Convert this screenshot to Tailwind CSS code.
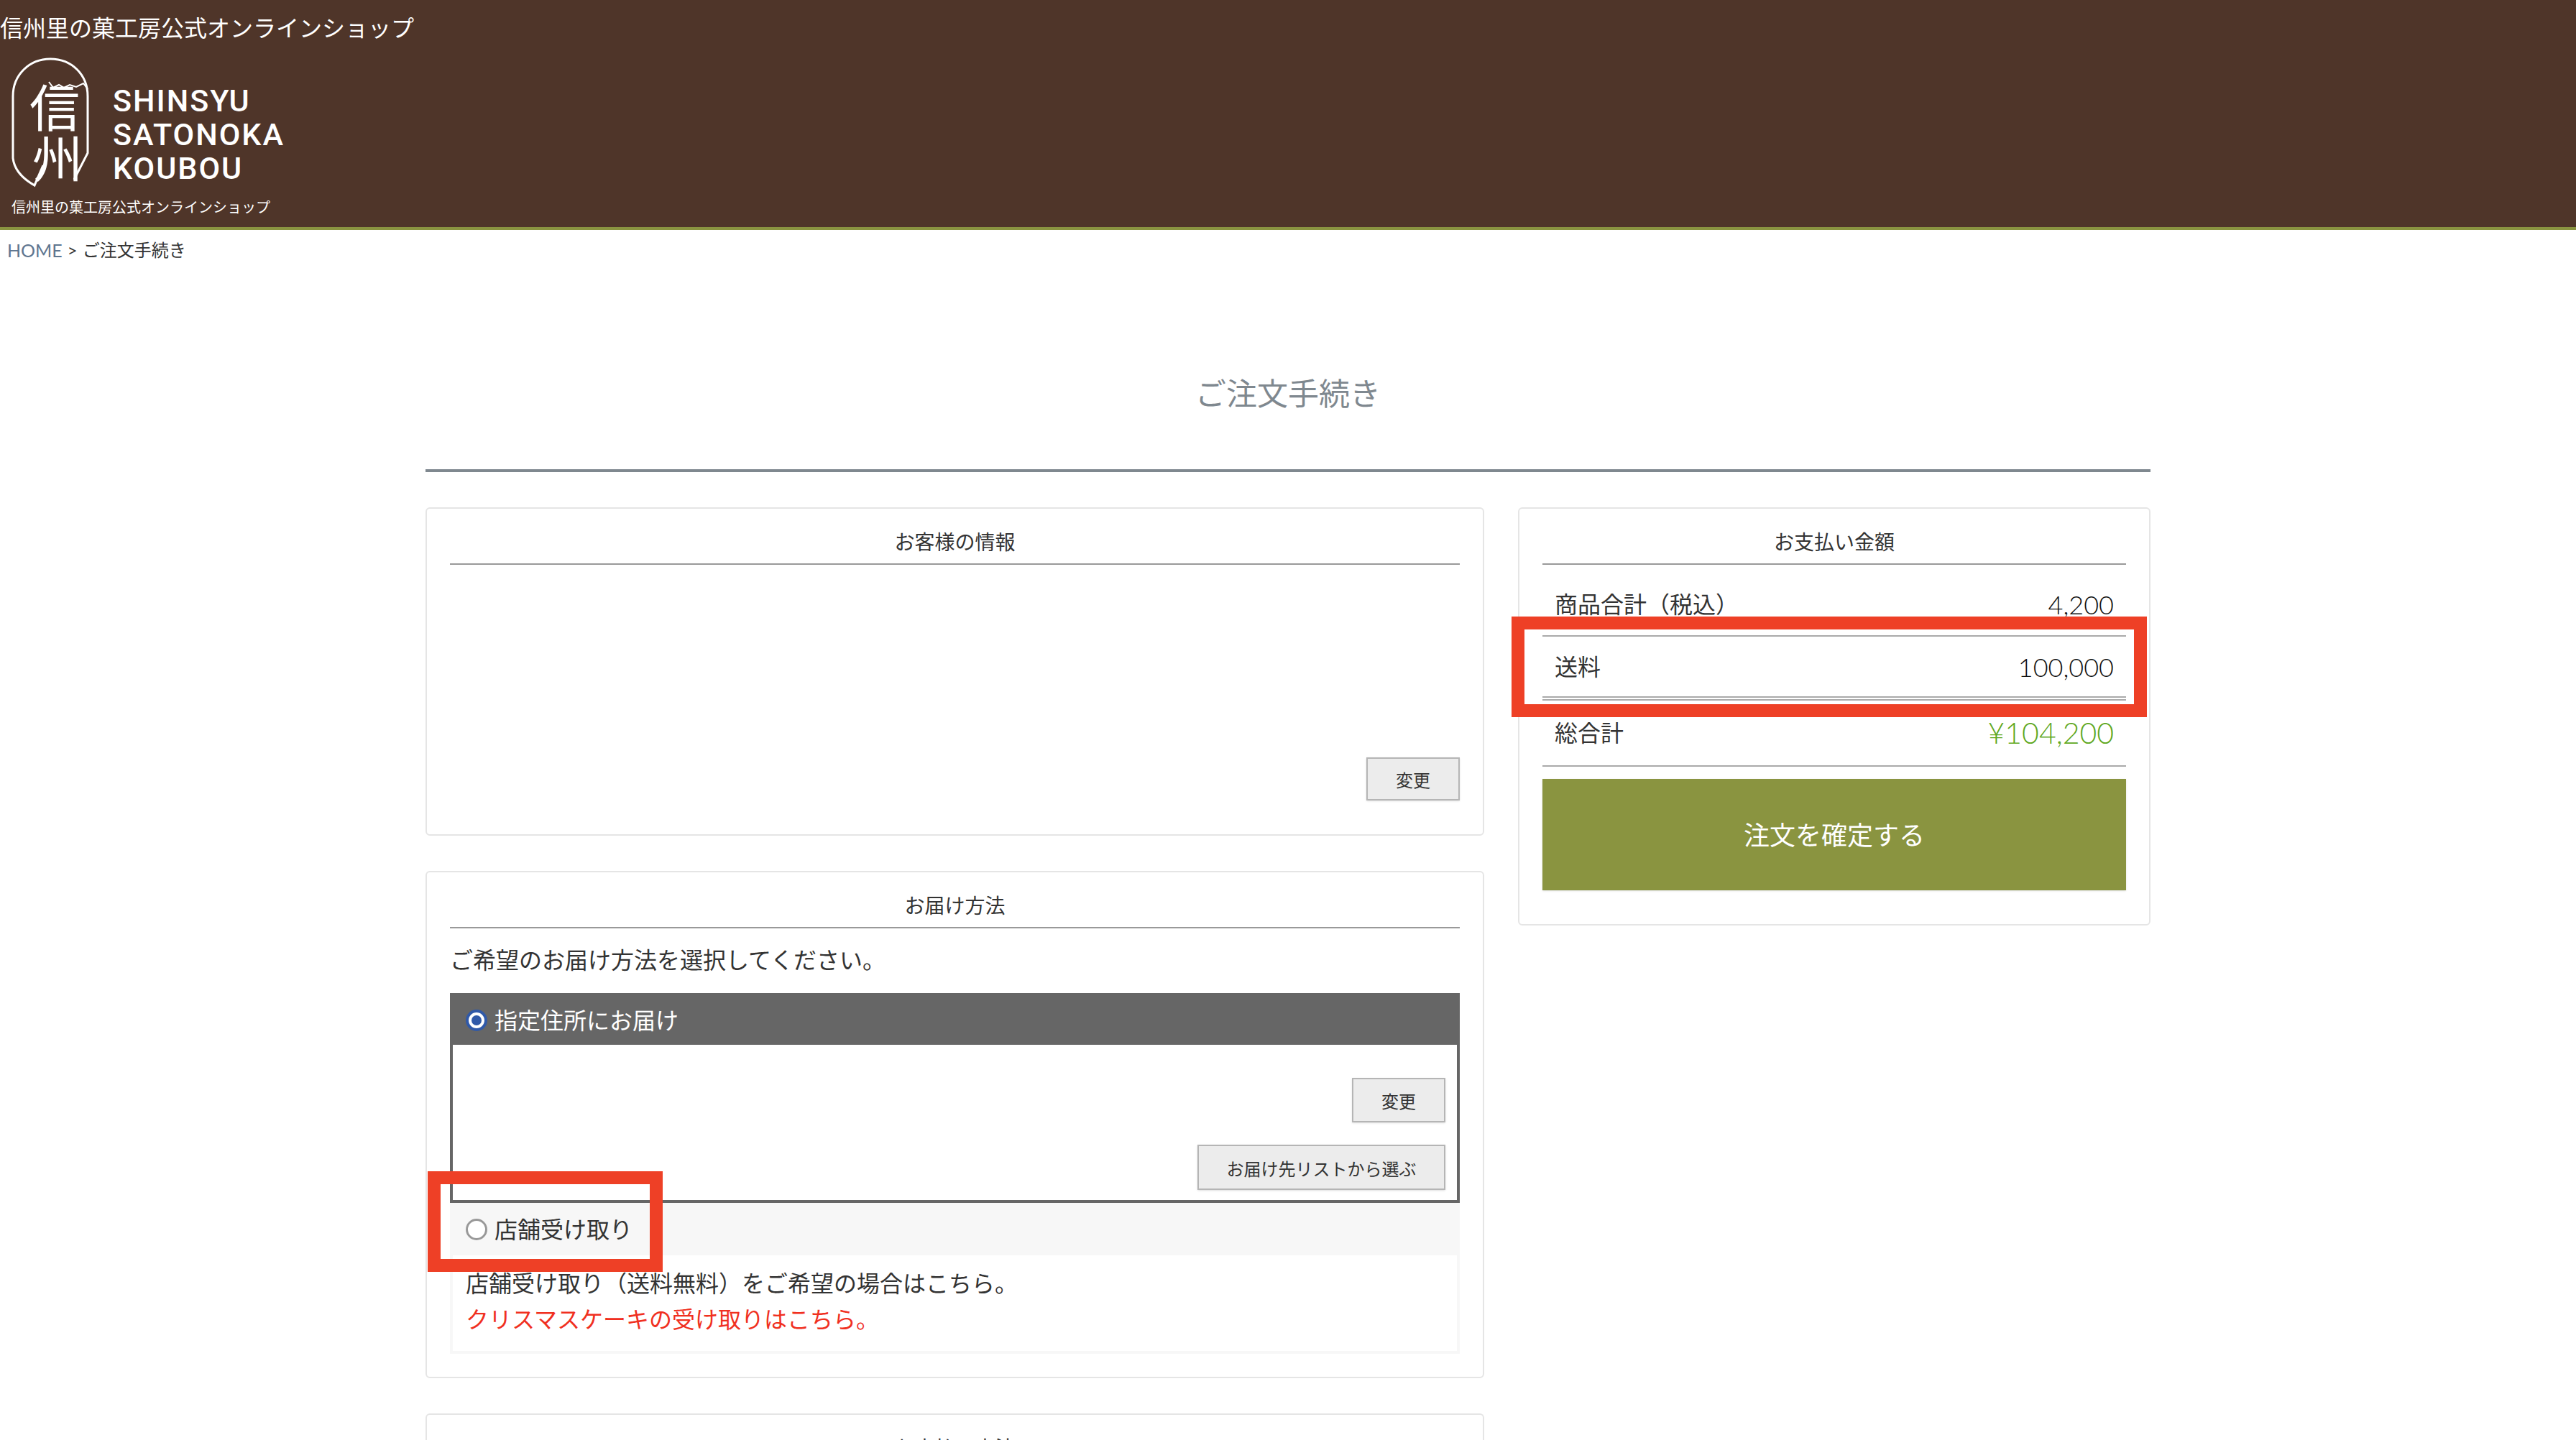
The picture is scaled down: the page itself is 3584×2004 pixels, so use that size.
<!DOCTYPE html>
<html lang="ja">
<head>
  <meta charset="UTF-8">
  <title>ご注文手続き</title>
  <script src="https://cdn.jsdelivr.net/npm/@tailwindcss/browser@4"></script>
</head>
<body class="bg-white h-[2004px] overflow-hidden font-['Lato','Noto_Sans_CJK_JP',sans-serif] font-normal text-[#333]">
  <!-- header -->
  <header class="bg-[#4f3529] h-[320px] border-b-4 border-[#8a9440] text-white">
    <p class="text-[32px] leading-[38px] pt-5 h-[78px]">信州里の菓工房公式オンラインショップ</p>
    <div class="flex items-start pl-4 gap-[31px] h-[198px]">
      <svg class="w-[110px] h-[182px] shrink-0 mt-[2px] overflow-visible" viewBox="0 0 110 182" fill="none" stroke="white" stroke-width="3">
        <path d="M2 120V54C2 24 25 2 54 2C84 2 106 24 106 54V133L87 170"/>
        <path d="M2 120V140C4 158 18 170 32 178L44 150"/>
        <path d="M52 34L58 42L66 38L73 42L81 38L90 41L100 36L106 44" stroke-width="2"/>
        <text x="60" y="97" font-size="70" text-anchor="middle" fill="white" stroke="none">信</text>
        <text x="64" y="168" font-size="70" text-anchor="middle" fill="white" stroke="none">州</text>
      </svg>
      <div class="font-['Roboto',sans-serif] font-medium text-[43px] leading-[47px] tracking-[2px] pt-[39px]">
        <div>SHINSYU</div>
        <div>SATONOKA</div>
        <div>KOUBOU</div>
      </div>
    </div>
    <p class="text-[20px] leading-6 pl-4">信州里の菓工房公式オンラインショップ</p>
  </header>

  <nav class="text-[24px] leading-[56px] h-[56px] pl-[10px] flex gap-[7px]">
    <a class="text-[#5f7690] text-[25px]">HOME</a><span>&gt;</span><span>ご注文手続き</span>
  </nav>

  <main class="w-[2400px] mx-auto">
    <h1 class="text-[43px] leading-[60px] text-center text-[#7f888f] pt-[142px] pb-[75px]">ご注文手続き</h1>
    <div class="border-t-4 border-[#7f888f] pt-[49px] flex gap-[47px] items-start">
      <!-- left column -->
      <div class="w-[1473px] shrink-0 flex flex-col gap-[49px]">
        <section class="h-[457px] border-2 border-[#e5e5e5] rounded-md px-8 flex flex-col">
          <h2 class="text-[28px] leading-[40px] text-center pt-[26px] h-[78px] border-b-2 border-[#999]">お客様の情報</h2>
          <div class="flex justify-end pt-[268px]">
            <button class="w-[130px] h-[60px] bg-[#ececec] border-2 border-[#b5b5b5] text-[24px] shadow-sm pt-1">変更</button>
          </div>
        </section>

        <section class="relative h-[706px] border-2 border-[#e5e5e5] rounded-md px-8">
          <h2 class="text-[28px] leading-[40px] text-center pt-[26px] h-[78px] border-b-2 border-[#999]">お届け方法</h2>
          <p class="text-[32px] leading-[44px] pt-[22px] h-[90px]">ご希望のお届け方法を選択してください。</p>
          <div class="border-4 border-[#666] h-[292px]">
            <div class="bg-[#666] h-[68px] text-white text-[32px] flex items-center gap-[10px] pl-[18px]">
              <span class="w-[30px] h-[30px] rounded-full bg-white border-4 border-[#3059a8] flex items-center justify-center">
                <span class="w-[14px] h-[14px] rounded-full bg-[#3059a8]"></span>
              </span>
              指定住所にお届け
            </div>
            <div class="flex flex-col items-end pt-[46px] pr-4 gap-[31px]">
              <button class="w-[130px] h-[62px] bg-[#ececec] border-2 border-[#b5b5b5] text-[24px] shadow-sm pt-1">変更</button>
              <button class="w-[345px] h-[63px] bg-[#ececec] border-2 border-[#b5b5b5] text-[24px] shadow-sm pt-1">お届け先リストから選ぶ</button>
            </div>
          </div>
          <div class="bg-[#f7f7f7] h-[73px] text-[32px] flex items-center gap-[10px] pl-[22px]">
            <span class="w-[30px] h-[30px] rounded-full bg-white border-[3px] border-[#999]"></span>
            店舗受け取り
          </div>
          <div class="border-x-4 border-b-4 border-[#f7f7f7] h-[137px] pl-[18px] pt-[14px] text-[32px] leading-[50px]">
            <p>店舗受け取り（送料無料）をご希望の場合はこちら。</p>
            <p class="text-[#f0301f]">クリスマスケーキの受け取りはこちら。</p>
          </div>
          <!-- annotation -->
          <div class="absolute left-px top-[416px] w-[327px] h-[140px] border-[18px] border-[#ee4026]"></div>
        </section>

        <section class="h-[37px] overflow-hidden border-2 border-b-0 border-[#e5e5e5] rounded-t-md px-8">
          <h2 class="text-[28px] leading-[40px] text-center pt-[26px]">お支払い方法</h2>
        </section>
      </div>

      <!-- right column -->
      <section class="relative w-[880px] h-[582px] border-2 border-[#e5e5e5] rounded-md px-8">
        <h2 class="text-[28px] leading-[40px] text-center pt-[26px] h-[78px] border-b-2 border-[#999]">お支払い金額</h2>
        <div class="flex justify-between items-center h-[100px] pt-3 px-[17px] text-[32px] border-b-2 border-[#aaa]">
          <span>商品合計（税込）</span><span class="text-[36px] font-light text-[#111]">4,200</span>
        </div>
        <div class="flex justify-between items-center h-[85px] px-[17px] text-[32px] border-b-2 border-[#aaa]">
          <span>送料</span><span class="text-[36px] font-light text-[#111]">100,000</span>
        </div>
        <div class="flex justify-between items-center h-[94px] mt-[2px] border-t-2 border-b-2 border-[#aaa] px-[17px] text-[32px]">
          <span>総合計</span><span class="text-[#5fa81f] text-[41px] font-light">¥104,200</span>
        </div>
        <button class="w-full h-[155px] mt-[17px] bg-[#8a9440] text-white text-[36px] shadow-sm">注文を確定する</button>
        <!-- annotation -->
        <div class="absolute left-[-11px] top-[150px] w-[884px] h-[140px] border-[18px] border-[#ee4026]"></div>
      </section>
    </div>
  </main>
</body>
</html>
